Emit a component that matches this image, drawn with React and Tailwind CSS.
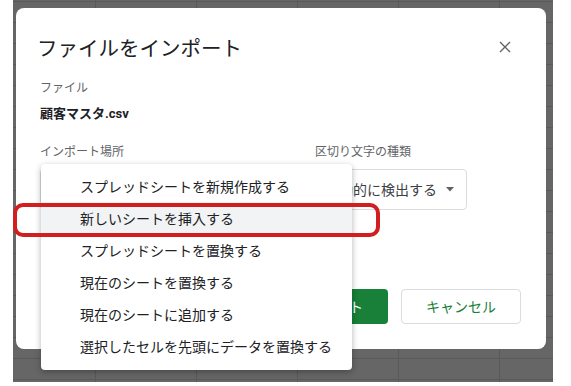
import React from 'react';

const font = { fontFamily: '"Noto Sans CJK JP", "Noto Sans", sans-serif' };

const items = [
  'スプレッドシートを新規作成する',
  '新しいシートを挿入する',
  'スプレッドシートを置換する',
  '現在のシートを置換する',
  '現在のシートに追加する',
  '選択したセルを先頭にデータを置換する',
];

const CloseIcon = () => (
  <svg width="12" height="12" viewBox="0 0 12 12" className="block">
    <path d="M1 1L11 11M11 1L1 11" stroke="#5f6368" strokeWidth="1.4" />
  </svg>
);

const Caret = () => (
  <svg width="8" height="5" viewBox="0 0 8 5" className="block">
    <path d="M0 0H8L4 4.5Z" fill="#5f6368" />
  </svg>
);

const App = () => {
  return (
    <div className="relative w-[571px] h-[386px] bg-white overflow-hidden" style={font}>
      {/* spreadsheet behind the modal backdrop */}
      <div className="absolute left-[13px] top-0 w-[540px] h-[382px] bg-[#666666] bg-[linear-gradient(#595959_1px,transparent_1px),linear-gradient(90deg,#595959_1px,transparent_1px)] bg-[size:101px_21px] bg-[position:82px_1px]" />

      {/* dialog */}
      <div className="absolute left-[16px] top-[8px] w-[530px] bg-white rounded-lg flex flex-col pl-6 pr-[25px] pt-6 pb-[25px]">
        <div className="flex items-center justify-between">
          <h1 className="text-[20.5px] leading-[30px] text-[#202124] font-normal -ml-[3px]">ファイルをインポート</h1>
          <div className="mr-[10px]">
            <CloseIcon />
          </div>
        </div>

        <div className="mt-[16px] text-[12px] leading-[18px] text-[#5f6368]">ファイル</div>
        <div className="mt-[8px] text-[13px] leading-[20px] font-bold text-[#202124]" style={{ fontFamily: 'Roboto, "Noto Sans CJK JP", sans-serif' }}>
          顧客マスタ.csv
        </div>

        <div className="mt-[18px] flex">
          <div className="w-[275px] flex flex-col">
            <div className="text-[12px] leading-[18px] text-[#5f6368]">インポート場所</div>
            <div className="mt-[9px] w-[250px] h-[41px] border border-[#dadce0] rounded" />
          </div>
          <div className="flex flex-col">
            <div className="text-[12px] leading-[18px] text-[#5f6368]">区切り文字の種類</div>
            <div className="mt-[9px] w-[152px] h-[41px] border border-[#dadce0] rounded flex items-center pl-[9px] gap-[9px]">
              <span className="text-[14px] text-[#3c4043]">自動的に検出する</span>
              <Caret />
            </div>
          </div>
        </div>

        <div className="mt-[79px] flex justify-end gap-[13px]">
          <button className="w-[120px] h-[35px] rounded bg-[#188038] text-white text-[14px]">インポート</button>
          <button className="w-[120px] h-[35px] rounded border border-[#dadce0] bg-white text-[#188038] text-[14px]">キャンセル</button>
        </div>
      </div>

      {/* open dropdown menu */}
      <div className="absolute left-[41px] top-[164px] w-[311px] bg-white rounded shadow-[0_2px_6px_rgba(0,0,0,0.3)] pt-[6px] pb-[8px]">
        {items.map((t, i) => (
          <div
            key={t}
            className={`h-[32px] flex items-center pl-[39px] text-[14px] text-[#202124] ${i === 1 ? 'bg-[#f1f3f4]' : ''}`}
          >
            {t}
          </div>
        ))}
      </div>

      {/* red annotation */}
      <div className="absolute left-[13px] top-[203px] w-[367px] h-[34px] border-[4px] border-[#d11f1f] rounded-[10px]" />
    </div>
  );
};

export default App;
